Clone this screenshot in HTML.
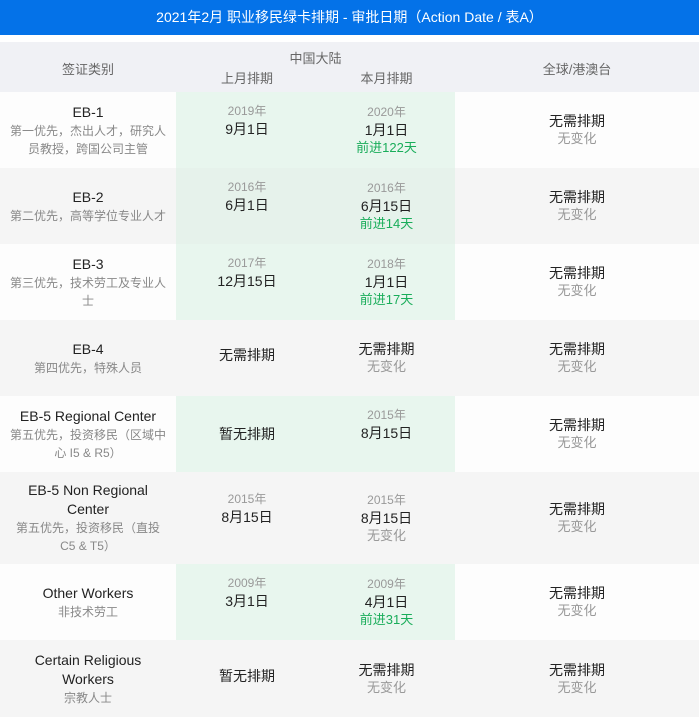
<!DOCTYPE html>
<html><head><meta charset="utf-8"><style>
*{margin:0;padding:0;box-sizing:border-box}
body{width:699px;height:717px;overflow:hidden;background:#fff;font-family:"Liberation Sans","Noto Sans CJK SC",sans-serif;color:#222}
.top{height:35px;background:#0472e8;color:#fff;font-size:14px;text-align:center;line-height:35px}
.hd{position:absolute;top:42px;left:0;width:699px;height:50px;background:#f0f1f5;color:#666;font-size:13px}
.hd div{position:absolute;text-align:center}
.row{position:absolute;left:0;width:699px;display:flex}
.row>div{display:flex;flex-direction:column;justify-content:center;align-items:center;text-align:center;line-height:18px}
.c1{width:176px}.c2{width:142px}.c3{width:137px}.c4{width:244px}
.c1 .m{max-width:150px;line-height:19px}
.c1 .s{max-width:157px}
.g{background:#e8f6ee}
.m{font-size:14px;color:#222}
.s{font-size:12px;color:#888}
.y{font-size:12px;color:#999}
.gr{font-size:13px;color:#19ad5a}
.n{font-size:13px;color:#999}
</style></head><body>
<div class="top">2021年2月 职业移民绿卡排期 - 审批日期（Action Date / 表A）</div>
<div class="hd">
<div style="left:0;width:176px;top:17px">签证类别</div>
<div style="left:176px;width:279px;top:6px">中国大陆</div>
<div style="left:176px;width:142px;top:26px">上月排期</div>
<div style="left:318px;width:137px;top:26px">本月排期</div>
<div style="left:455px;width:244px;top:17px">全球/港澳台</div>
</div>

<div class="row" style="top:92px;height:76px;background:#fdfdfd">
<div class="c1"><span class="m">EB-1</span><span class="s">第一优先，杰出人才，研究人员教授，跨国公司主管</span></div>
<div class="c2 g" style="justify-content:flex-start;padding-top:10px"><span class="y">2019年</span><span class="m">9月1日</span></div>
<div class="c3 g"><span class="y">2020年</span><span class="m">1月1日</span><span class="gr">前进122天</span></div>
<div class="c4"><span class="m">无需排期</span><span class="n">无变化</span></div>
</div>
<div class="row" style="top:168px;height:76px;background:#f5f5f5">
<div class="c1"><span class="m">EB-2</span><span class="s">第二优先，高等学位专业人才</span></div>
<div class="c2 g" style="justify-content:flex-start;padding-top:10px;background:#e6f2eb"><span class="y">2016年</span><span class="m">6月1日</span></div>
<div class="c3 g" style="background:#e6f2eb"><span class="y">2016年</span><span class="m">6月15日</span><span class="gr">前进14天</span></div>
<div class="c4"><span class="m">无需排期</span><span class="n">无变化</span></div>
</div>
<div class="row" style="top:244px;height:76px;background:#fdfdfd">
<div class="c1"><span class="m">EB-3</span><span class="s">第三优先，技术劳工及专业人士</span></div>
<div class="c2 g" style="justify-content:flex-start;padding-top:10px"><span class="y">2017年</span><span class="m">12月15日</span></div>
<div class="c3 g"><span class="y">2018年</span><span class="m">1月1日</span><span class="gr">前进17天</span></div>
<div class="c4"><span class="m">无需排期</span><span class="n">无变化</span></div>
</div>
<div class="row" style="top:320px;height:76px;background:#f5f5f5">
<div class="c1"><span class="m">EB-4</span><span class="s">第四优先，特殊人员</span></div>
<div class="c2" style="justify-content:flex-start;padding-top:26px"><span class="m">无需排期</span></div>
<div class="c3"><span class="m">无需排期</span><span class="n">无变化</span></div>
<div class="c4"><span class="m">无需排期</span><span class="n">无变化</span></div>
</div>
<div class="row" style="top:396px;height:76px;background:#fdfdfd">
<div class="c1"><span class="m">EB-5 Regional Center</span><span class="s">第五优先，投资移民（区域中心 I5 &amp; R5）</span></div>
<div class="c2 g"><span class="m">暂无排期</span></div>
<div class="c3 g" style="justify-content:flex-start;padding-top:10px"><span class="y">2015年</span><span class="m">8月15日</span></div>
<div class="c4"><span class="m">无需排期</span><span class="n">无变化</span></div>
</div>
<div class="row" style="top:472px;height:92px;background:#f5f5f5">
<div class="c1"><span class="m">EB-5 Non Regional Center</span><span class="s">第五优先，投资移民（直投 C5 &amp; T5）</span></div>
<div class="c2" style="justify-content:flex-start;padding-top:18px"><span class="y">2015年</span><span class="m">8月15日</span></div>
<div class="c3"><span class="y">2015年</span><span class="m">8月15日</span><span class="n">无变化</span></div>
<div class="c4"><span class="m">无需排期</span><span class="n">无变化</span></div>
</div>
<div class="row" style="top:564px;height:76px;background:#fdfdfd">
<div class="c1"><span class="m">Other Workers</span><span class="s">非技术劳工</span></div>
<div class="c2 g" style="justify-content:flex-start;padding-top:10px"><span class="y">2009年</span><span class="m">3月1日</span></div>
<div class="c3 g"><span class="y">2009年</span><span class="m">4月1日</span><span class="gr">前进31天</span></div>
<div class="c4"><span class="m">无需排期</span><span class="n">无变化</span></div>
</div>
<div class="row" style="top:640px;height:77px;background:#f5f5f5">
<div class="c1"><span class="m">Certain Religious Workers</span><span class="s">宗教人士</span></div>
<div class="c2" style="justify-content:flex-start;padding-top:27px"><span class="m">暂无排期</span></div>
<div class="c3"><span class="m">无需排期</span><span class="n">无变化</span></div>
<div class="c4"><span class="m">无需排期</span><span class="n">无变化</span></div>
</div>
</body></html>
